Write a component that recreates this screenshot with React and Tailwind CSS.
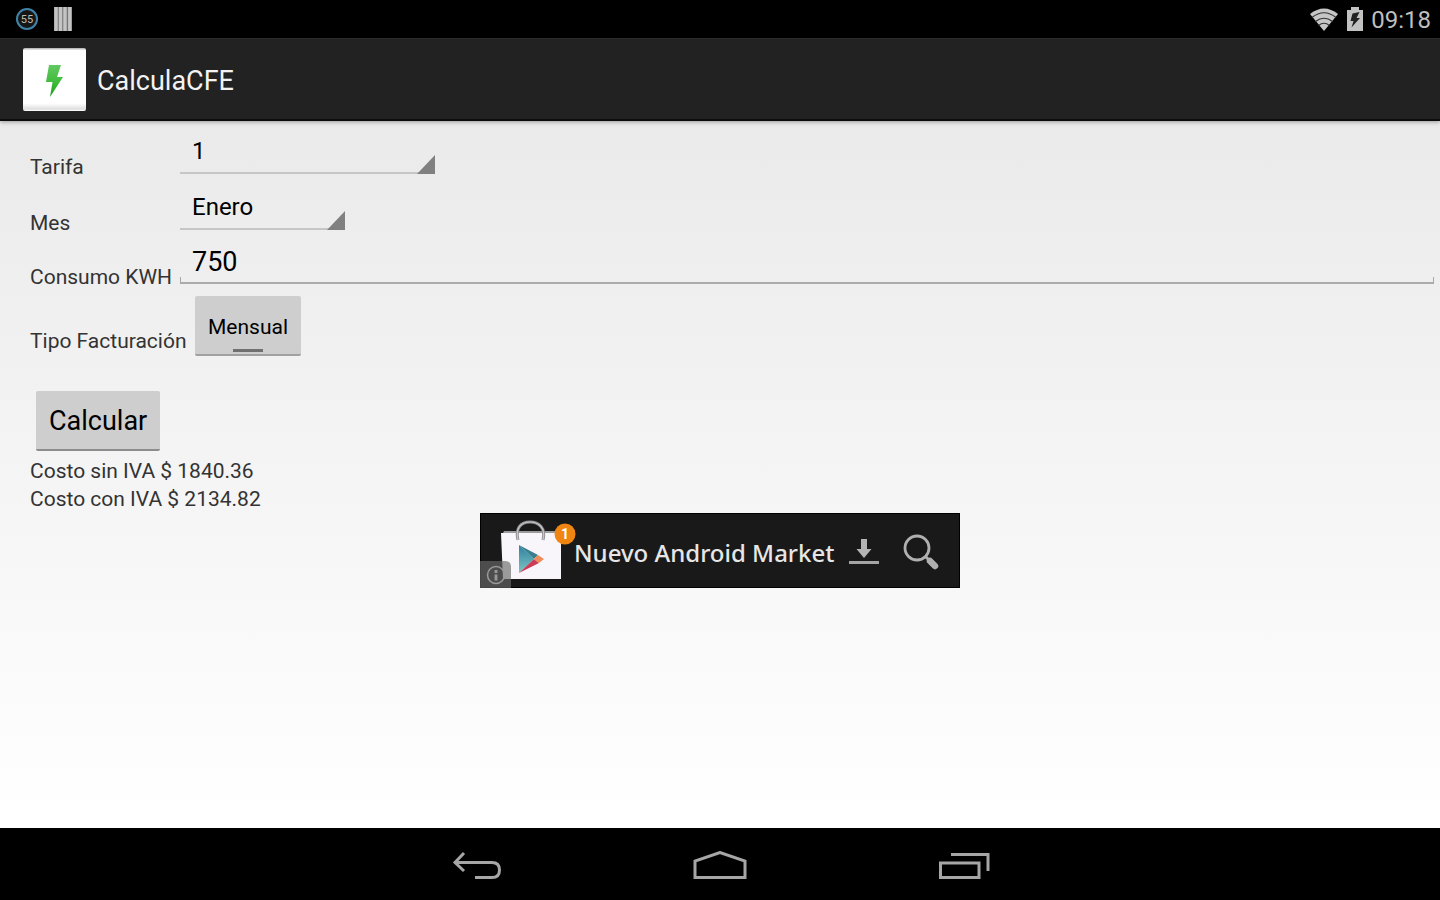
import { useState } from "react";

const MONTHS = [
  "Enero",
  "Febrero",
  "Marzo",
  "Abril",
  "Mayo",
  "Junio",
  "Julio",
  "Agosto",
  "Septiembre",
  "Octubre",
  "Noviembre",
  "Diciembre",
];
const RATES = ["1", "1A", "1B", "1C", "1D", "1E", "1F"];

const StatusBar = () => (
  <div className="flex h-[38px] items-center justify-between bg-black pr-[9px] pl-4">
    <div className="flex items-center gap-4">
      <div className="flex size-[22px] items-center justify-center rounded-full border-2 border-[#3f84a8] bg-[#161616] text-[11px] leading-none text-[#c4bcae]">
        55
      </div>
      <svg width="18" height="24" viewBox="0 0 18 24" aria-hidden="true">
        <rect width="18" height="24" fill="#777" />
        <path d="M2 0v24M6.5 0v24M11 0v24M15.8 0v24" stroke="#c4c4c4" strokeWidth="3.4" />
      </svg>
    </div>
    <div className="flex items-center gap-2 text-[#bebebe]">
      <svg width="30" height="24" viewBox="0 0 30 24" aria-hidden="true">
        <path d="M1 7Q15-4 29 7L15 24Z" fill="#c6c6c6" />
        <path
          d="M3 10.5Q15 1 27 10.5M6.5 14.5Q15 8 23.5 14.5M9.5 18.5Q15 14 20.5 18.5"
          fill="none"
          stroke="#333"
          strokeWidth="1.2"
        />
      </svg>
      <svg width="16" height="24" viewBox="0 0 16 24" aria-hidden="true">
        <path d="M4 0h8v3h4v21H0V3h4z" fill="#c2c2c2" />
        <path d="M5.5 6.5L12.5 5l-3 6H13L4.5 20.5l2-6.5H3.5z" fill="#222" />
      </svg>
      <span className="pt-0.5 text-2xl leading-7">09:18</span>
    </div>
  </div>
);

const ActionBar = () => (
  <header className="relative z-10 flex h-[83px] items-center gap-[11px] border-t border-[#2c2c2c] border-b-2 border-b-[#0c0c0c] bg-[#222] pl-[23px] shadow-[0_1px_4px_rgba(0,0,0,0.35)]">
    <svg width="63" height="63" viewBox="0 0 63 63" aria-hidden="true">
      <defs>
        <linearGradient id="tile" x1="0" y1="0" x2="0" y2="1">
          <stop offset="0" stopColor="#aaa" />
          <stop offset="0.04" stopColor="#fff" />
          <stop offset="0.88" stopColor="#fff" />
          <stop offset="0.97" stopColor="#dedede" />
          <stop offset="1" stopColor="#fff" />
        </linearGradient>
        <linearGradient id="bolt" x1="0" y1="0" x2="0" y2="1">
          <stop offset="0" stopColor="#62c962" />
          <stop offset="0.55" stopColor="#3fbb3c" />
          <stop offset="1" stopColor="#12a012" />
        </linearGradient>
      </defs>
      <rect width="63" height="63" rx="2" fill="url(#tile)" />
      <path d="M26 17h12l-4 12h6L27 49l2.5-15H23z" fill="url(#bolt)" />
    </svg>
    <h1 className="pt-1 text-[27px] leading-8 text-[#f3f3f3]">CalculaCFE</h1>
  </header>
);

const Spinner = ({ id, options, value, onChange, width }) => (
  <div className={`relative mb-[5px] ${width}`}>
    <select
      id={id}
      value={value}
      onChange={(e) => onChange(e.target.value)}
      className="block h-[45px] w-full appearance-none border-b-2 border-[#c6c6c6] bg-transparent px-3 text-2xl text-black outline-none"
    >
      {options.map((option) => (
        <option key={option}>{option}</option>
      ))}
    </select>
    <svg
      className="pointer-events-none absolute right-0 bottom-0"
      width="18"
      height="19"
      viewBox="0 0 18 19"
      aria-hidden="true"
    >
      <path d="M18 0v19H0z" fill="#808080" />
    </svg>
  </div>
);

const AdBanner = () => (
  <a
    href="#market"
    className="relative mx-auto flex h-[75px] w-[480px] items-center bg-[#191919] pl-5 ring-1 ring-black ring-inset"
  >
    <svg className="overflow-visible" width="74" height="75" viewBox="0 0 74 75" aria-hidden="true">
      <defs>
        <linearGradient id="play" x1="0" y1="0" x2="0" y2="1">
          <stop offset="0" stopColor="#2f7f9f" />
          <stop offset="1" stopColor="#7cc6c4" />
        </linearGradient>
      </defs>
      <path d="M4 18h56v4H2z" fill="#9b9b9b" />
      <path d="M1 20h60v46H3z" fill="#f8f6fa" />
      <path d="M18 27c-3-12 3-18 12-18s16 6 13 18" fill="none" stroke="#8c8c90" strokeWidth="3" />
      <path d="M18 27c-3-12 3-18 12-18s16 6 13 18" fill="none" stroke="#c8c8cc" strokeWidth="1.2" />
      <path d="M19 32v28l15-14z" fill="url(#play)" />
      <path d="M19 32l19 10-4 4z" fill="#3a7f8d" />
      <path d="M19 60l15-14 5 4z" fill="#cc3b56" />
      <path d="M34 46l4-4 6 4-5 4z" fill="#ef8d5a" />
      <circle cx="65" cy="21" r="10.5" fill="#f08512" />
    </svg>
    <span className="absolute top-[11px] left-[75px] w-5 text-center text-sm leading-5 font-bold text-white">
      1
    </span>
    <span className="w-[274px] pt-1 font-['Noto_Sans'] text-2xl leading-9 font-medium whitespace-nowrap text-[#e6e6e6]">
      Nuevo Android Market
    </span>
    <svg width="32" height="28" viewBox="0 0 32 28" aria-hidden="true">
      <path d="M13 2h6v10h4.5L16 21 8.5 12H13z" fill="#b4b4b4" />
      <path d="M1 25.5h30" stroke="#a4a4a4" strokeWidth="3" />
    </svg>
    <svg className="ml-[22px]" width="38" height="38" viewBox="0 0 38 38" aria-hidden="true">
      <circle cx="15" cy="16" r="12" fill="none" stroke="#b0b0b0" strokeWidth="2.8" />
      <path d="M23 24l4 4" stroke="#b0b0b0" strokeWidth="3" />
      <path d="M28 29l5 5" stroke="#b0b0b0" strokeWidth="6.5" strokeLinecap="round" />
    </svg>
    <svg className="absolute bottom-0 left-0" width="31" height="27" viewBox="0 0 31 27" aria-hidden="true">
      <path d="M0 0h25q6 0 6 6v21H0z" fill="#6a6a6a" fillOpacity="0.65" />
      <circle cx="16" cy="14" r="8.5" fill="none" stroke="#999" strokeWidth="1.5" />
      <path d="M16 9v3M16 13.5v6" stroke="#999" strokeWidth="2.8" />
    </svg>
  </a>
);

const NavigationBar = () => (
  <nav className="flex h-[72px] items-center justify-center gap-[190px] bg-black pt-1">
    <button type="button" aria-label="Atrás">
      <svg width="54" height="30" viewBox="0 0 54 30" fill="none" stroke="#a6a6a6" strokeWidth="3">
        <path d="M15 2L6 11.5 15 20M6 11.5h37q7.5 0 7.5 7.5t-7.5 7.5H26" />
      </svg>
    </button>
    <button type="button" aria-label="Inicio">
      <svg width="54" height="30" viewBox="0 0 54 30" fill="none" stroke="#a6a6a6" strokeWidth="3">
        <path d="M2 26.5V10L27 1.5 52 10v16.5z" />
      </svg>
    </button>
    <button type="button" aria-label="Recientes">
      <svg width="54" height="30" viewBox="0 0 54 30" fill="none" stroke="#a6a6a6" strokeWidth="3">
        <path d="M3.5 12h38.5v14.5H3.500zM14 3.500h37V20" />
      </svg>
    </button>
  </nav>
);

const App = () => {
  const [rate, setRate] = useState("1");
  const [month, setMonth] = useState("Enero");
  const [usage, setUsage] = useState("750");
  const [monthly, setMonthly] = useState(true);

  return (
    <div className="flex min-h-screen flex-col bg-white font-[Roboto,sans-serif] text-[#333]">
      <StatusBar />
      <ActionBar />
      <main className="flex-1 bg-linear-to-b from-[#eaeaea] to-white pt-2">
        <form
          className="flex flex-col gap-1.5 pr-1.5 pl-[30px] text-[21px] leading-6"
          onSubmit={(e) => e.preventDefault()}
        >
          <div className="flex items-end">
            <label htmlFor="rate" className="w-[150px]">
              Tarifa
            </label>
            <Spinner id="rate" options={RATES} value={rate} onChange={setRate} width="w-[255px]" />
          </div>
          <div className="flex items-end">
            <label htmlFor="month" className="w-[150px]">
              Mes
            </label>
            <Spinner id="month" options={MONTHS} value={month} onChange={setMonth} width="w-[165px]" />
          </div>
          <div className="flex items-end">
            <label htmlFor="usage" className="w-[150px] whitespace-nowrap">
              Consumo KWH
            </label>
            <div className="relative mb-[5px] flex-1 before:absolute before:bottom-0 before:left-0 before:h-[7px] before:w-px before:bg-[#a8a8a8] after:absolute after:right-0 after:bottom-0 after:h-[7px] after:w-px after:bg-[#a8a8a8]">
              <input
                id="usage"
                type="text"
                inputMode="numeric"
                value={usage}
                onChange={(e) => setUsage(e.target.value)}
                className="block h-[43px] w-full border-b-2 border-[#ababab] bg-transparent px-3 text-[27px] text-black outline-none"
              />
            </div>
          </div>
          <div className="mt-px flex items-end gap-1.5">
            <label htmlFor="billing" className="mb-[3px] min-w-[159px]">
              Tipo Facturación
            </label>
            <button
              id="billing"
              type="button"
              onClick={() => setMonthly(!monthly)}
              className="flex h-[60px] flex-col items-center justify-end rounded-xs border-b-2 border-[#a0a0a0] bg-[#cecece] px-[13px] text-black"
            >
              <span className="mb-2.5">{monthly ? "Mensual" : "Bimestral"}</span>
              <span className="mb-0.5 h-[3px] w-[30px] bg-[#707070]" />
            </button>
          </div>
          <button
            type="submit"
            className="mt-[29px] ml-1.5 h-[60px] self-start rounded-xs border-b-2 border-[#8c8c8c] bg-[#cecece] px-[13px] pt-0.5 text-[27px] text-black"
          >
            Calcular
          </button>
          <div className="leading-7">
            <p>Costo sin IVA $ 1840.36</p>
            <p>Costo con IVA $ 2134.82</p>
          </div>
        </form>
        <AdBanner />
      </main>
      <NavigationBar />
    </div>
  );
};

export default App;
